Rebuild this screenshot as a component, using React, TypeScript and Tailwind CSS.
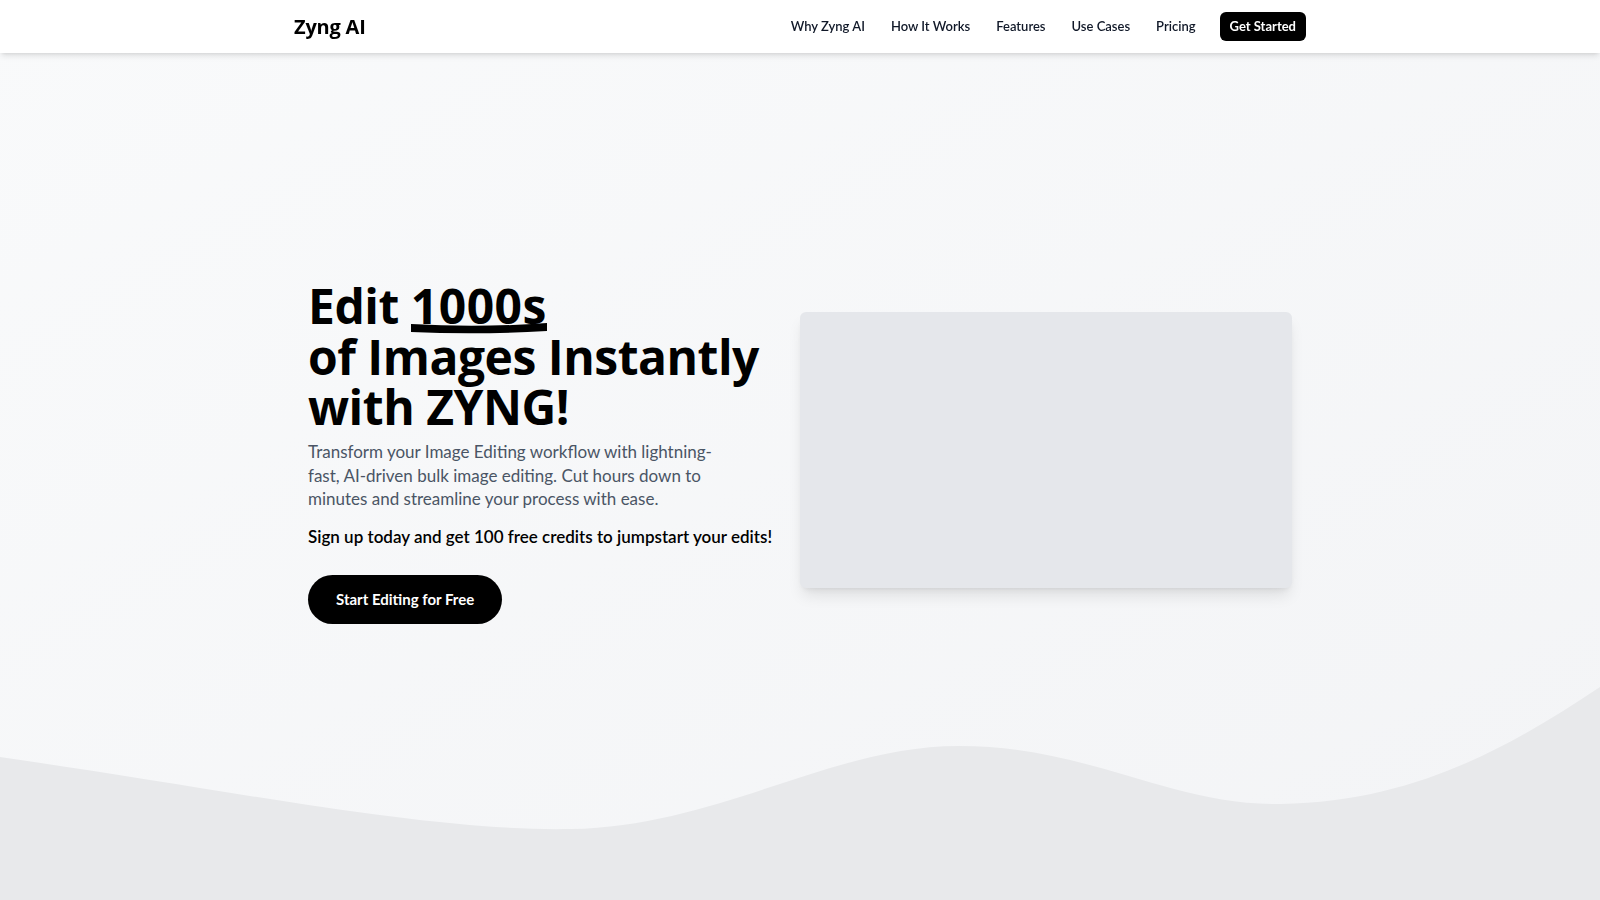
const navLinks = ["Why Zyng AI", "How It Works", "Features", "Use Cases", "Pricing"];

function Navbar() {
  return (
    <header className="fixed inset-x-0 top-0 z-20 bg-white shadow-md">
      <nav className="mx-auto flex h-[53px] max-w-5xl items-center justify-between px-1.5">
        <a href="#" className="font-['Open_Sans',sans-serif] text-[20px] font-bold tracking-[-0.01em] text-black">
          Zyng AI
        </a>
        <div className="flex items-center gap-[26px]">
          {navLinks.map((l) => (
            <a key={l} href="#" className="text-[13px] font-semibold text-gray-900">
              {l}
            </a>
          ))}
          <a
            href="#"
            className="-ml-[2px] flex h-[29px] items-center rounded-md bg-black px-[10px] text-[13px] font-bold text-white"
          >
            Get Started
          </a>
        </div>
      </nav>
    </header>
  );
}

function Wave() {
  return (
    <svg
      className="pointer-events-none absolute inset-x-0 bottom-0 h-[230px] w-full"
      viewBox="0 0 1600 230"
      preserveAspectRatio="none"
    >
      <path
        fill="#e8e9eb"
        d="M0,87 C230,120 430,162 571,159 C720,156 830,76 959,76 C1090,76 1170,136 1281,134 C1420,132 1520,70 1600,17 L1600,230 L0,230 Z"
      />
    </svg>
  );
}

function Hero() {
  return (
    <section className="relative flex min-h-screen items-center overflow-hidden bg-linear-to-br from-[#f9fafb] to-[#f3f4f6]">
      <Wave />
      <div className="relative z-10 mx-auto grid w-full max-w-5xl grid-cols-2 items-center px-5">
        <div className="pt-[5px]">
          <h1 className="font-['Open_Sans',sans-serif] text-[48px] font-bold leading-[1.05] tracking-[-0.01em] text-black">
            Edit{" "}
            <span className="relative inline-block tracking-[0.01em]">
              1000s
              <svg
                className="absolute left-0 top-[41px] h-[13px] w-full"
                viewBox="0 0 136 13"
                preserveAspectRatio="none"
              >
                <path d="M0,2 Q68,6 136,1 L136,9 Q68,13 0,10 Z" fill="#000" />
              </svg>
            </span>
            <br />
            of Images Instantly
            <br />
            with ZYNG!
          </h1>
          <p className="mt-2 text-[17px] leading-[23.5px] text-gray-600">
            Transform your Image Editing workflow with lightning-
            <br />
            fast, AI-driven bulk image editing. Cut hours down to
            <br />
            minutes and streamline your process with ease.
          </p>
          <p className="mt-3 whitespace-nowrap text-[17px] font-semibold leading-7 text-black">
            Sign up today and get 100 free credits to jumpstart your edits!
          </p>
          <a
            href="#"
            className="mt-6 inline-flex h-[49px] items-center rounded-full bg-black px-[28px] text-[15px] font-bold text-white"
          >
            Start Editing for Free
          </a>
        </div>
        <div className="aspect-video w-full rounded-md bg-gray-200 shadow-lg" />
      </div>
    </section>
  );
}

export default function App() {
  return (
    <div className="min-h-screen font-['Lato',sans-serif] text-black">
      <Navbar />
      <Hero />
    </div>
  );
}
